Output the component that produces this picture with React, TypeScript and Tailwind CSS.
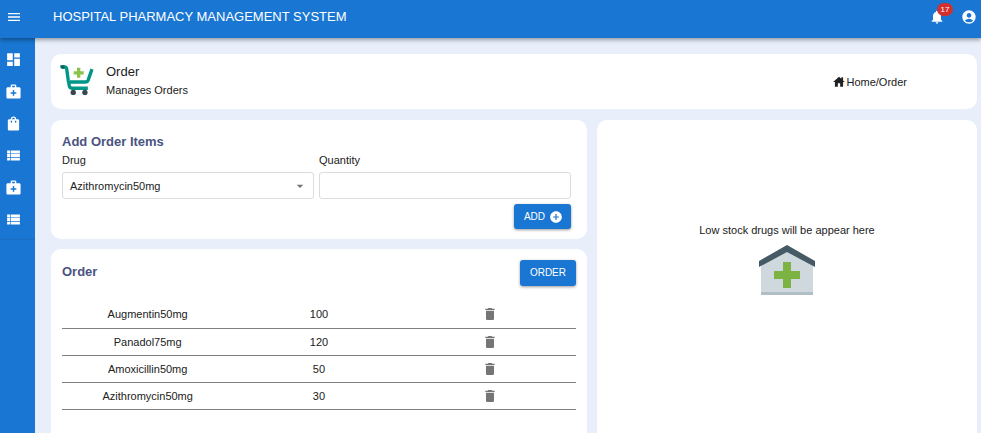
import { useState } from "react";
import type { ReactNode } from "react";
import {
  MdAccountCircle,
  MdAddCircle,
  MdArrowDropDown,
  MdDashboard,
  MdDelete,
  MdMedicalServices,
  MdMenu,
  MdNotifications,
  MdShoppingBag,
  MdViewList,
} from "react-icons/md";

const drugs = ["Augmentin50mg", "Panadol75mg", "Amoxicillin50mg", "Azithromycin50mg"];

const navItems = [
  { label: "Dashboard", Icon: MdDashboard },
  { label: "Drugs", Icon: MdMedicalServices },
  { label: "Orders", Icon: MdShoppingBag },
  { label: "Order list", Icon: MdViewList },
  { label: "Inventory", Icon: MdMedicalServices },
  { label: "Inventory list", Icon: MdViewList },
];

const initialItems = [
  { drug: "Augmentin50mg", quantity: 100 },
  { drug: "Panadol75mg", quantity: 120 },
  { drug: "Amoxicillin50mg", quantity: 50 },
  { drug: "Azithromycin50mg", quantity: 30 },
];

function Card({ className = "", children }: { className?: string; children: ReactNode }) {
  return <section className={`rounded-[10px] bg-white ${className}`}>{children}</section>;
}

function CartLogo() {
  return (
    <svg viewBox="0 0 48 48" className="size-10 shrink-0" aria-hidden="true">
      <path
        d="M6 6h3c1.500 0 2.300.8 2.600 2.200L13.500 22l1.200 6.500c.4 2 1.300 3 3.300 3H37M14 24h20c2 0 2.800-.6 3.400-2.200L42 8.500"
        fill="none"
        stroke="#009688"
        strokeWidth="4"
        strokeLinejoin="round"
      />
      <path d="M4 4h5v4H6a2 2 0 0 1-2-2z" fill="#00695c" />
      <path d="M28 7h-4v4h-4v4h4v4h4v-4h4v-4h-4z" fill="#8bc34a" />
      <circle cx="19.500" cy="36.500" r="3.200" fill="#37474f" />
      <circle cx="33.500" cy="36.500" r="3.200" fill="#37474f" />
    </svg>
  );
}

function HouseIcon() {
  return (
    <svg viewBox="0 0 24 24" className="size-3.5" fill="currentColor" aria-hidden="true">
      <path d="M19 9.300V4h-3v2.600L12 3 2 12h3v8h5v-6h4v6h5v-8h3z" />
    </svg>
  );
}

function PharmacyLogo() {
  return (
    <svg viewBox="0 0 58 52" className="h-13 w-[58px]" aria-hidden="true">
      <path d="M3 16 29 3l26 13v32H3z" fill="#cfd8dc" />
      <path d="M3 48h52v3H3z" fill="#b0bec5" />
      <path d="M29 1 1 17v6L29 8l28 15v-6z" fill="#455a64" />
      <path d="M25 18h8v9h9v8h-9v9h-8v-9h-9v-8h9z" fill="#7cb342" />
    </svg>
  );
}

export default function App() {
  const [drug, setDrug] = useState("Azithromycin50mg");
  const [quantity, setQuantity] = useState("");
  const [items, setItems] = useState(initialItems);

  return (
    <div className="flex h-screen flex-col overflow-hidden bg-[#e8effa] font-['Liberation_Sans',Arial,sans-serif] text-[11px] leading-4 text-[#212121]">
      <header className="z-10 flex h-[38px] shrink-0 items-center bg-[#1976d2] pr-1 pb-1 pl-1.5 text-white shadow-[0_2px_4px_rgba(0,0,0,0.35)]">
        <button type="button" aria-label="Open menu" className="flex w-4 justify-center">
          <MdMenu size={16} />
        </button>
        <h1 className="ml-[31px] grow text-[13px] leading-5">HOSPITAL PHARMACY MANAGEMENT SYSTEM</h1>
        <button type="button" aria-label="17 notifications" className="relative mr-4">
          <MdNotifications size={16} />
          <span className="absolute -top-1.5 left-2 flex h-[13px] w-4 items-center justify-center rounded-full bg-[#d32f2f] text-[8px] leading-none">
            17
          </span>
        </button>
        <button type="button" aria-label="Account">
          <MdAccountCircle size={16} />
        </button>
      </header>

      <div className="flex min-h-0 grow">
        <nav className="w-[35px] shrink-0 bg-[#1976d2] text-white" aria-label="Main">
          <ul className="border-b border-[#1a6fc2] pt-[5px] pb-1">
            {navItems.map(({ label, Icon }) => (
              <li key={label} className="flex h-8 items-center pl-[5px]">
                <a href="#" aria-label={label}>
                  <Icon size={17} />
                </a>
              </li>
            ))}
          </ul>
        </nav>

        <main className="flex min-w-0 grow flex-col gap-[11px] pt-4 pr-1 pl-4">
          <Card className="flex h-[55px] shrink-0 items-center pr-[70px] pl-1.5">
            <CartLogo />
            <div className="ml-[9px] grow pb-1">
              <h2 className="text-[13px] leading-5">Order</h2>
              <p>Manages Orders</p>
            </div>
            <a href="#" className="flex items-center">
              <HouseIcon />
              Home/Order
            </a>
          </Card>

          <div className="grid min-h-0 grow grid-cols-[536fr_380fr] gap-2.5">
            <div className="flex min-h-0 flex-col gap-2.5">
              <Card className="shrink-0 pt-3 pr-4 pb-2.5 pl-[11px]">
                <h3 className="text-[13px] leading-5 font-bold text-[#4a5480]">Add Order Items</h3>
                <form
                  onSubmit={(event) => {
                    event.preventDefault();
                    setItems([...items, { drug, quantity: Number(quantity) }]);
                  }}
                >
                  <div className="grid grid-cols-2 gap-[5px]">
                    <div>
                      <label htmlFor="drug">Drug</label>
                      <div className="relative mt-1">
                        <select
                          id="drug"
                          value={drug}
                          onChange={(event) => setDrug(event.target.value)}
                          className="block h-[27px] w-full appearance-none rounded-[3px] border border-[#dcdcdc] bg-white px-[7px]"
                        >
                          {drugs.map((name) => (
                            <option key={name}>{name}</option>
                          ))}
                        </select>
                        <MdArrowDropDown
                          size={16}
                          className="pointer-events-none absolute top-1.5 right-1.5 text-[#757575]"
                        />
                      </div>
                    </div>
                    <div>
                      <label htmlFor="quantity">Quantity</label>
                      <input
                        id="quantity"
                        value={quantity}
                        onChange={(event) => setQuantity(event.target.value)}
                        className="mt-1 block h-[27px] w-full rounded-[3px] border border-[#dcdcdc] px-[7px]"
                      />
                    </div>
                  </div>
                  <button
                    type="submit"
                    className="mt-[5px] ml-auto flex h-[25px] items-center gap-1 rounded-[3px] bg-[#1976d2] pr-2 pl-2.5 text-[10px] text-white shadow-[0_1px_3px_rgba(0,0,0,0.4)]"
                  >
                    ADD
                    <MdAddCircle size={14} />
                  </button>
                </form>
              </Card>

              <Card className="min-h-0 grow rounded-b-none px-[11px] pt-[11px]">
                <div className="flex items-start justify-between">
                  <h3 className="text-[13px] leading-6 font-bold text-[#4a5480]">Order</h3>
                  <button
                    type="button"
                    className="h-[26px] rounded-[3px] bg-[#1976d2] px-2.5 text-[10px] text-white shadow-[0_1px_3px_rgba(0,0,0,0.4)]"
                  >
                    ORDER
                  </button>
                </div>
                <table className="mt-[15px] w-full table-fixed border-collapse text-center" aria-label="Order items">
                  <tbody>
                    {items.map((item, index) => (
                      <tr key={item.drug + index} className="h-[27px] border-b border-[#808080]">
                        <td>{item.drug}</td>
                        <td>{item.quantity}</td>
                        <td>
                          <button
                            type="button"
                            aria-label={`Delete ${item.drug}`}
                            className="mx-auto block text-[#757575]"
                            onClick={() => setItems(items.filter((_, i) => i !== index))}
                          >
                            <MdDelete size={16} />
                          </button>
                        </td>
                      </tr>
                    ))}
                  </tbody>
                </table>
              </Card>
            </div>

            <Card className="flex flex-col items-center rounded-b-none pt-[102px]">
              <p>Low stock drugs will be appear here</p>
              <div className="mt-1.5">
                <PharmacyLogo />
              </div>
            </Card>
          </div>
        </main>
      </div>
    </div>
  );
}
